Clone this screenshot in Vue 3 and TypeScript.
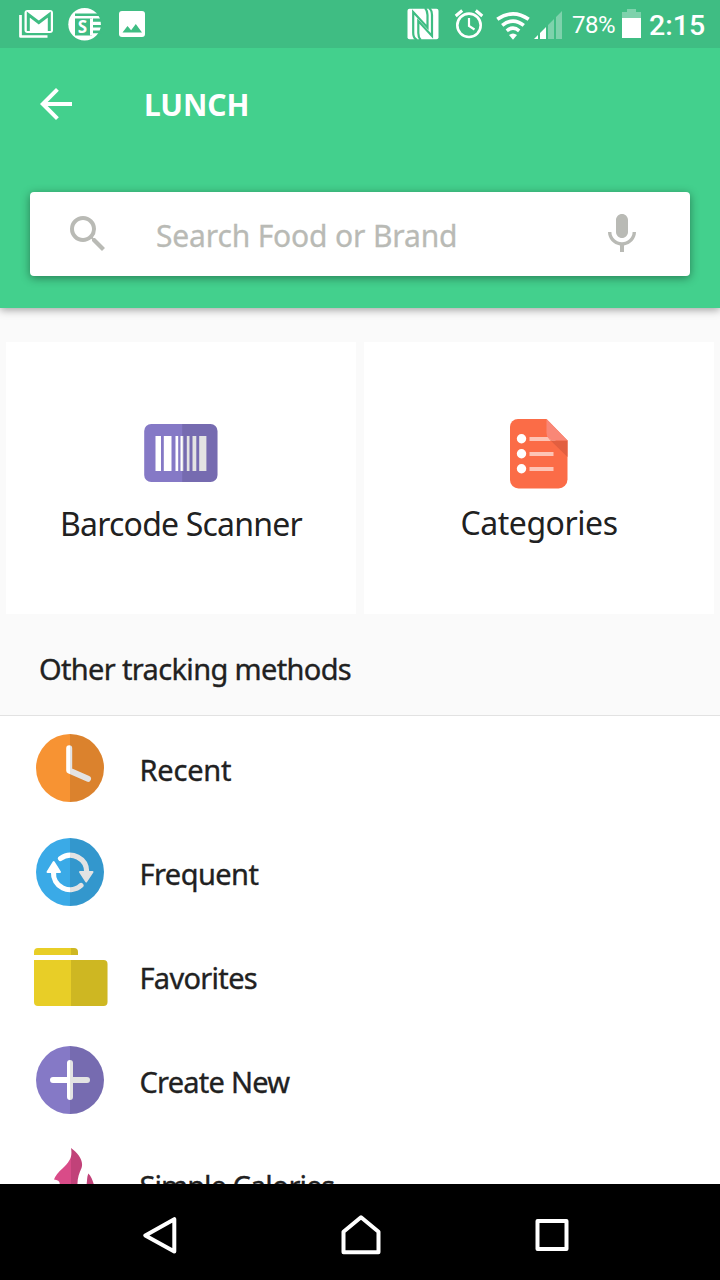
<script setup lang="ts">
type IconName = 'recent' | 'frequent' | 'favorites' | 'create' | 'calories'

interface Method {
  icon: IconName
  label: string
  tracking: number
}

const methods: Method[] = [
  { icon: 'recent', label: 'Recent', tracking: -0.2 },
  { icon: 'frequent', label: 'Frequent', tracking: -0.55 },
  { icon: 'favorites', label: 'Favorites', tracking: -0.7 },
  { icon: 'create', label: 'Create New', tracking: -0.75 },
  { icon: 'calories', label: 'Simple Calories', tracking: -0.95 },
]
</script>

<template>
  <div class="screen">
    <header class="header">
      <div class="status">
        <div class="status-left">
          <svg width="35" height="30" viewBox="19 9 35 30">
            <path d="M20.500 15v21.500h27" fill="none" stroke="#fff" stroke-width="2.700" stroke-linejoin="round" />
            <rect x="24.500" y="10" width="28.500" height="23" rx="3" fill="#fff" />
            <path d="M28.300 31V14.500L38.800 22.500L49.300 14.500V31" fill="none" stroke="#3fbd83" stroke-width="3" />
          </svg>
          <svg width="34" height="34" viewBox="68 7 34 34">
            <circle cx="84.600" cy="24.300" r="16.300" fill="#fff" />
            <g fill="#3fbd83">
              <path d="M75 13.400h27v2.600H75zM75 18.500h17v17H75zM93 18.500h9v3.200h-9zM93 25h9v2.400h-9zM93 30.600h9v2.600h-9z" />
            </g>
            <rect x="90" y="18.500" width="2.300" height="17" fill="#fff" />
            <text x="82.500" y="33" class="s-letter">S</text>
          </svg>
          <svg width="26" height="26" viewBox="0 0 26 26">
            <rect width="26" height="26" rx="3" fill="#fff" />
            <path d="M3.500 21.500l5-6.500 3.600 4.300 4.700-6.300 6.200 8.500z" fill="#3fbd83" />
          </svg>
        </div>
        <div class="status-right">
          <svg class="nfc" width="32" height="32" viewBox="407 8 32 32">
            <rect x="407.500" y="8.700" width="31" height="30.600" rx="2" fill="#fff" />
            <g fill="none" stroke="#3fbd83" stroke-width="2.200">
              <path d="M417 40q-3.800-2-3.800-7V12L427.500 27.500V15q0-4.500-2.500-7" />
              <path d="M429 8q3 2 3 7v21L418.300 21v12q0 4.500 2.500 7" />
            </g>
          </svg>
          <svg class="alarm" width="30" height="30" viewBox="454 9 30 30">
            <g fill="none" stroke="#fff">
              <circle cx="469" cy="25.300" r="11.700" stroke-width="2.600" />
              <path d="M469 18v8l5.500 3.500" stroke-width="2.200" />
              <path d="M455.700 16l6.500-5.500M475.800 10.500l6.500 5.500" stroke-width="3" />
            </g>
          </svg>
          <svg class="wifi" width="34" height="29" viewBox="496 10 34 29">
            <g fill="none" stroke="#fff" stroke-width="3.600">
              <path d="M497.300 18.300q15.700-11 31.400 0" />
              <path d="M502.200 24.300q10.800-8.500 21.600 0" />
              <path d="M506.800 29.800q6.200-5.200 12.400 0" />
            </g>
            <path d="M509 34q4-3 8 0l-4 4.800z" fill="#fff" />
          </svg>
          <svg class="signal" width="28" height="29" viewBox="534 10 28 29">
            <path d="M534 39l4-4v4zM540 39v-6l6-6v12z" fill="#fff" />
            <path d="M548 39V25l6-6v20zM556 39V17l6-6v28z" fill="#fff" opacity=".33" />
          </svg>
          <span class="percent">78%</span>
          <svg class="battery" width="19" height="29" viewBox="0 0 19 29">
            <path d="M5 0h9v3h5v6H0V3h5z" fill="#fff" opacity=".33" />
            <path d="M0 9h19v20H0z" fill="#fff" />
          </svg>
          <span class="time">2:15</span>
        </div>
      </div>

      <div class="toolbar">
        <svg width="48" height="48" viewBox="0 0 24 24">
          <path fill="#fff" d="M20 11H7.830l5.590-5.590L12 4l-8 8 8 8 1.410-1.410L7.830 13H20v-2z" />
        </svg>
        <h1 class="title">LUNCH</h1>
      </div>

      <div class="search">
        <svg width="48" height="48" viewBox="0 0 24 24">
          <path
            fill="#b9bab5"
            d="M15.500 14h-.79l-.28-.27A6.471 6.471 0 0 0 16 9.500 6.500 6.500 0 1 0 9.500 16c1.610 0 3.090-.59 4.230-1.570l.27.28v.79l5 4.990L20.490 19l-4.990-5zm-6 0C7.010 14 5 11.990 5 9.500S7.010 5 9.500 5 14 7.010 14 9.500 11.990 14 9.500 14z"
          />
        </svg>
        <span class="placeholder">Search Food or Brand</span>
        <svg width="48" height="48" viewBox="0 0 24 24">
          <path
            fill="#b9bab5"
            d="M12 14c1.660 0 3-1.340 3-3V5c0-1.660-1.340-3-3-3S9 3.340 9 5v6c0 1.660 1.340 3 3 3zm5.300-3c0 3-2.540 5.100-5.300 5.100S6.700 14 6.700 11H5c0 3.410 2.720 6.230 6 6.720V21h2v-3.280c3.280-.48 6-3.300 6-6.720h-1.700z"
          />
        </svg>
      </div>
    </header>

    <main class="content">
      <div class="cards">
        <section class="card scanner">
          <svg width="75" height="58" viewBox="143.500 424 75 58">
            <rect x="143.700" y="424" width="73.300" height="58" rx="7" fill="#8579c6" />
            <path d="M155 436h5.500v35H155zM163.300 436h7.700v35h-7.700zM175 436h2.700v35H175zM180 436h2.800v35H180zM186.300 436h2.700v35h-2.700zM192 436h3.800v35H192zM198.700 436h7.200v35h-7.200z" fill="#fff" />
            <path d="M181.700 424H210a7 7 0 0 1 7 7v44a7 7 0 0 1-7 7h-28.300z" fill="#000" opacity=".11" />
          </svg>
          <span class="card-label">Barcode Scanner</span>
        </section>
        <section class="card categories">
          <svg width="59" height="70" viewBox="509.500 419 59 70">
            <path d="M517.500 419h28.500l21 21.500v39a9 9 0 0 1-9 9H518a8.500 8.500 0 0 1-8.500-8.500v-53a8 8 0 0 1 8-8z" fill="#fb6c47" />
            <path d="M529 437h26v4h-26zM529 452h24v4h-24zM529 467h24v4h-24z" fill="#fff" opacity=".6" />
            <path d="M548 438.500L567 457V440.500h-16z" fill="#e25f40" />
            <path d="M546 419l21 21.500h-14q-7-1-7-8z" fill="#f98777" />
            <circle cx="521" cy="438.800" r="4.700" fill="#fff" />
            <circle cx="521" cy="453.800" r="4.700" fill="#fff" />
            <circle cx="521" cy="468.800" r="4.700" fill="#fff" />
          </svg>
          <span class="card-label">Categories</span>
        </section>
      </div>

      <h2 class="section-title">Other tracking methods</h2>

      <ul class="list">
        <li v-for="m in methods" :key="m.icon" class="row">
          <svg v-if="m.icon === 'recent'" class="icon" viewBox="0 0 76 76">
            <circle cx="38" cy="38" r="34" fill="#f79333" />
            <path d="M37.200 18.300v22.200L56 48.800" class="glyph" stroke-width="6" />
            <path d="M38 4a34 34 0 0 1 0 68z" class="shade" />
          </svg>
          <svg v-else-if="m.icon === 'frequent'" class="icon" viewBox="0 0 76 76">
            <circle cx="38" cy="38" r="34" fill="#3aaae7" />
            <path d="M28.500 24.500A16.500 16.500 0 0 1 54.700 38M49 51.400A16.500 16.500 0 0 1 21.500 38" class="glyph" stroke-width="5.200" />
            <path d="M48 38h12.500l-6.300 9.500zM15.500 38h12.500l-6.300-10z" fill="#fff" stroke="#fff" stroke-width="2" stroke-linejoin="round" />
            <path d="M38 4a34 34 0 0 1 0 68z" class="shade" />
          </svg>
          <svg v-else-if="m.icon === 'favorites'" class="icon" viewBox="0 0 76 76">
            <path d="M2 17v-3a4 4 0 0 1 4-4h36a4 4 0 0 1 4 4v3zM2 22h69.500a4 4 0 0 1 4 4v38a4 4 0 0 1-4 4H6a4 4 0 0 1-4-4z" fill="#e8ce27" />
            <path d="M39 10h3a4 4 0 0 1 4 4v3h-7zM39 22h32.500a4 4 0 0 1 4 4v38a4 4 0 0 1-4 4H39z" class="shade" />
          </svg>
          <svg v-else-if="m.icon === 'create'" class="icon" viewBox="0 0 76 76">
            <circle cx="38" cy="38" r="34" fill="#8579c6" />
            <path d="M38 21v34M21 38h34" class="glyph" stroke-width="6" />
            <path d="M38 4a34 34 0 0 1 0 68z" class="shade" />
          </svg>
          <svg v-else class="icon" viewBox="0 0 76 76">
            <path d="M39 2C46 7 52 15 49.500 22C46.500 29 45 33 45.500 42L53 42C56 38 54 34 56.300 27.500C60 31 62 38 63 44V66H20V46C31 40 29 34 22 33.500Q24 28 31 22C37 16 41 11 39 2z" fill="#d94b88" />
            <path d="M39 2C46 7 52 15 49.500 22C46.500 29 45 33 45.500 42L53 42C56 38 54 34 56.300 27.500C60 31 62 38 63 44V66H39z" class="shade" />
          </svg>
          <span class="row-label" :style="{ letterSpacing: `${m.tracking}px` }">{{ m.label }}</span>
        </li>
      </ul>
    </main>

    <nav class="navbar">
      <svg width="34" height="38" viewBox="143 1216 34 38">
        <path d="M174.300 1219.200v32.400l-29-16.200z" />
      </svg>
      <svg class="home" width="40" height="40" viewBox="340.500 1214.500 40 40">
        <path d="M343 1251.700v-20.400l17.500-14.500 17.500 14.500v20.400z" />
      </svg>
      <svg width="34" height="34" viewBox="535.500 1218 34 34">
        <path d="M538 1221h29v28h-29z" />
      </svg>
    </nav>
  </div>
</template>

<style>
body {
  margin: 0;
}
</style>

<style scoped>
.screen {
  width: 720px;
  height: 1280px;
  display: flex;
  flex-direction: column;
  overflow: hidden;
  background: #fafafa;
  color: #212121;
  font-family: 'Noto Sans', 'Open Sans', sans-serif;
}

svg {
  display: block;
  flex: none;
}

.header {
  flex: none;
  height: 308px;
  background: #43d08d;
  box-shadow: 0 2px 8px rgba(0, 0, 0, 0.36);
  position: relative;
}

.status {
  height: 48px;
  display: flex;
  align-items: center;
  justify-content: space-between;
  padding: 0 16px 0 19px;
  box-sizing: border-box;
  background: #3fbd83;
  color: #fff;
  font-family: Roboto, sans-serif;
}

.status-left,
.status-right {
  display: flex;
  align-items: center;
}

.status-left {
  gap: 14px;
}

.status-left svg:last-child {
  margin-left: 3px;
}

.s-letter {
  font: 700 17px 'Noto Sans', sans-serif;
  fill: #fff;
  text-anchor: middle;
}

.alarm {
  margin-left: 15px;
}

.wifi {
  margin: 2px 0 0 12px;
}

.signal {
  margin: 0 0 0 4px;
}

.percent {
  margin: 2px 0 0 10px;
  width: 43px;
  font-size: 24px;
  letter-spacing: -0.5px;
}

.battery {
  margin: -1px 0 0 7px;
}

.time {
  margin: 2px 0 0 8px;
  width: 55px;
  font-size: 28.500px;
  font-weight: 500;
}

.toolbar {
  height: 112px;
  display: flex;
  align-items: center;
  padding-left: 32px;
}

.title {
  margin: 2px 0 0 64px;
  font-size: 30px;
  line-height: 40px;
  font-weight: 700;
  letter-spacing: -0.1px;
  color: #fff;
}

.search {
  height: 84px;
  margin: 32px 30px 0;
  padding: 0 44px 0 34px;
  box-sizing: border-box;
  display: flex;
  align-items: center;
  border-radius: 4px;
  background: #fff;
  box-shadow: 0 2px 10px rgba(0, 0, 0, 0.4);
}

.placeholder {
  flex: 1;
  margin: 3px 0 0 44px;
  font-size: 30px;
  line-height: 40px;
  letter-spacing: -0.15px;
  color: #b9bab5;
  white-space: nowrap;
  -webkit-text-stroke: 0.3px currentColor;
}

.content {
  flex: 1;
  min-height: 0;
  overflow: hidden;
}

.cards {
  display: grid;
  grid-template-columns: 1fr 1fr;
  gap: 8px;
  padding: 34px 6px 0;
}

.card {
  height: 272px;
  box-sizing: border-box;
  display: flex;
  flex-direction: column;
  align-items: center;
  background: #fff;
}

.scanner {
  padding-top: 82px;
}

.categories {
  padding-top: 77px;
}

.card-label {
  font-size: 32px;
  line-height: 40px;
  white-space: nowrap;
}

.scanner .card-label {
  margin-top: 22px;
  letter-spacing: -0.8px;
}

.categories .card-label {
  margin-top: 14px;
  letter-spacing: -0.45px;
}

.section-title {
  margin: 0;
  height: 101px;
  padding: 0 39px;
  font-size: 29px;
  line-height: 110px;
  font-weight: 400;
  letter-spacing: -0.65px;
  border-bottom: 1px solid #e2e2e2;
  -webkit-text-stroke: 0.35px currentColor;
}

.list {
  margin: 0;
  padding: 0;
  list-style: none;
  background: #fff;
}

.row {
  height: 104px;
  display: flex;
  align-items: center;
  padding-left: 32px;
}

.icon {
  width: 76px;
  height: 76px;
}

.glyph {
  fill: none;
  stroke: #fff;
  stroke-linecap: round;
  stroke-linejoin: round;
}

.shade {
  fill: #000;
  opacity: 0.11;
}

.row-label {
  margin: 3px 0 0 31.500px;
  font-size: 29px;
  line-height: 40px;
  -webkit-text-stroke: 0.35px currentColor;
}

.navbar {
  flex: none;
  height: 96px;
  padding: 6px 151px 0 143px;
  box-sizing: border-box;
  display: flex;
  align-items: center;
  justify-content: space-between;
  background: #000;
}

.navbar path {
  fill: none;
  stroke: #fff;
  stroke-width: 4;
  stroke-linejoin: round;
}

.navbar .home {
  margin-left: 9px;
}
</style>
